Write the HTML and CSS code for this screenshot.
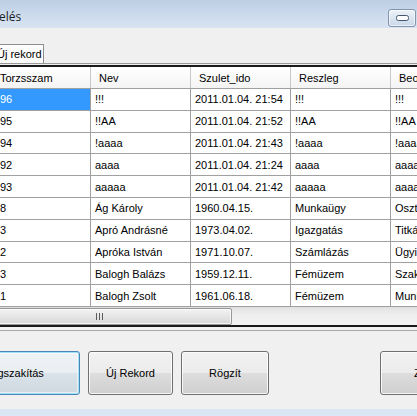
FILE: index.html
```html
<!DOCTYPE html>
<html lang="hu">
<head>
<meta charset="utf-8">
<title>Adatkezelés</title>
<link rel="stylesheet" href="styles.css">
</head>
<body>
<div class="window">
  <div class="titlebar">
    <span class="title">elés</span>
    <div class="minbtn">
      <svg width="13" height="6" viewBox="0 0 13 6"><rect x="0.5" y="0.5" width="12" height="5" rx="2" fill="#fff" stroke="#44556e"/></svg>
    </div>
  </div>
  <div class="client">
    <div class="tabs"><div class="tab">Új rekord</div></div>
    <div class="page">
      <div class="grid">
        <div class="viewport">
          <div class="row head">
            <div class="cell">Torzsszam</div><div class="cell">Nev</div><div class="cell">Szulet_ido</div><div class="cell">Reszleg</div><div class="cell">Beosztas</div>
          </div>
          <div class="row"><div class="cell sel">96</div><div class="cell">!!!</div><div class="cell">2011.01.04. 21:54</div><div class="cell">!!!</div><div class="cell">!!!</div></div>
          <div class="row"><div class="cell">95</div><div class="cell">!!AA</div><div class="cell">2011.01.04. 21:52</div><div class="cell">!!AA</div><div class="cell">!!AA</div></div>
          <div class="row"><div class="cell">94</div><div class="cell">!aaaa</div><div class="cell">2011.01.04. 21:43</div><div class="cell">!aaaa</div><div class="cell">!aaaa</div></div>
          <div class="row"><div class="cell">92</div><div class="cell">aaaa</div><div class="cell">2011.01.04. 21:24</div><div class="cell">aaaa</div><div class="cell">aaaa</div></div>
          <div class="row"><div class="cell">93</div><div class="cell">aaaaa</div><div class="cell">2011.01.04. 21:42</div><div class="cell">aaaaa</div><div class="cell">aaaaa</div></div>
          <div class="row"><div class="cell">8</div><div class="cell">Ág Károly</div><div class="cell">1960.04.15.</div><div class="cell">Munkaügy</div><div class="cell">Osztályvezető</div></div>
          <div class="row"><div class="cell">3</div><div class="cell">Apró Andrásné</div><div class="cell">1973.04.02.</div><div class="cell">Igazgatás</div><div class="cell">Titkárnő</div></div>
          <div class="row"><div class="cell">2</div><div class="cell">Apróka István</div><div class="cell">1971.10.07.</div><div class="cell">Számlázás</div><div class="cell">Ügyintéző</div></div>
          <div class="row"><div class="cell">3</div><div class="cell">Balogh Balázs</div><div class="cell">1959.12.11.</div><div class="cell">Fémüzem</div><div class="cell">Szakmunkás</div></div>
          <div class="row"><div class="cell">1</div><div class="cell">Balogh Zsolt</div><div class="cell">1961.06.18.</div><div class="cell">Fémüzem</div><div class="cell">Munkás</div></div>
        </div>
        <div class="hscroll">
          <div class="thumb">
            <svg width="7" height="7" viewBox="0 0 7 7"><path d="M0.5 0v7M3.5 0v7M6.5 0v7" stroke="#5a5a5a" stroke-width="1"/></svg>
          </div>
        </div>
      </div>
      <div class="actions">
        <button class="btn wide focus">Megszakítás</button>
        <button class="btn">Új Rekord</button>
        <button class="btn">Rögzít</button>
        <div class="spacer"></div>
        <button class="btn last">Zárás</button>
      </div>
    </div>
  </div>
  <div class="frame-bottom"></div>
</div>
</body>
</html>
```

FILE: styles.css
```css
html, body {
  margin: 0;
  padding: 0;
}
body {
  width: 417px;
  height: 416px;
  overflow: hidden;
  background: #f0f0f0;
  font-family: "Liberation Sans", Arial, sans-serif;
  font-size: 11px;
  color: #000;
}
.window {
  display: flex;
  flex-direction: column;
  height: 416px;
}
.titlebar {
  height: 28px;
  flex: none;
  display: flex;
  align-items: flex-start;
  justify-content: space-between;
  background: linear-gradient(#bccee4, #cddbed 55%, #d9e4f2);
}
.title {
  font-family: "Open Sans", "Noto Sans", sans-serif;
  font-size: 12px;
  color: #1e1e1e;
  margin-top: 9px;
  margin-left: -1px;
  line-height: 16px;
}
.minbtn {
  margin-top: 9px;
  margin-right: 1px;
  width: 26px;
  height: 16px;
  border: 1px solid #8295ad;
  border-radius: 3px;
  background: linear-gradient(#eef3f9, #dbe5f1 50%, #cad8ea);
  display: flex;
  align-items: center;
  justify-content: center;
  box-shadow: inset 0 0 0 1px rgba(255,255,255,0.6);
}
.client {
  flex: 1;
  display: flex;
  flex-direction: column;
}
.tabs {
  padding-top: 16px;
  height: 19px;
  flex: none;
  display: flex;
}
.tab {
  margin-left: -6px;
  width: 46px;
  height: 18px;
  border: 1px solid #8c8e94;
  border-bottom: none;
  background: #fcfcfc;
  line-height: 19px;
  padding-left: 2px;
  white-space: nowrap;
  overflow: hidden;
}
.page {
  flex: 1;
  display: flex;
  flex-direction: column;
  border-top: 1px solid #9a9a9a;
}
.grid {
  margin-top: 1px;
  border-top: 2px solid #1a1a1a;
  border-bottom: 2px solid #1a1a1a;
  background: #fff;
  overflow: hidden;
}
.viewport {
  margin-left: -6px;
  width: 560px;
}
.row {
  display: grid;
  grid-template-columns: 97px 100px 100px 100px 150px;
  height: 21.8px;
  box-sizing: border-box;
  border-bottom: 1px solid #a0a0a0;
  background: #fff;
}
.row.head {
  height: 22px;
  background: linear-gradient(#ffffff, #f4f4f4);
}
.cell {
  border-right: 1px solid #a0a0a0;
  padding-left: 4px;
  display: flex;
  align-items: center;
  white-space: nowrap;
  overflow: hidden;
}
.row .cell:first-child {
  padding-left: 6px;
}
.head .cell {
  padding-left: 8px;
  border-right-color: #c8c8c8;
}
.head .cell:first-child {
  padding-left: 6px;
}
.cell.sel {
  background: #3399ff;
  color: #fff;
}
.hscroll {
  height: 17px;
  background: linear-gradient(#e3e3e3, #efefef 40%, #f2f2f2);
  border-top: 1px solid #e0e0e0;
  display: flex;
  align-items: center;
}
.thumb {
  margin-left: -34px;
  width: 264px;
  height: 15px;
  border: 1px solid #989898;
  border-radius: 2px;
  background: linear-gradient(#f3f3f3, #e6e6e6 50%, #d6d6d6);
  box-shadow: inset 0 0 0 1px rgba(255,255,255,0.7);
  display: flex;
  align-items: center;
  justify-content: center;
}
.actions {
  margin-top: 3px;
  border-top: 1px solid #a8a8a8;
  padding-top: 20px;
  display: flex;
  align-items: flex-start;
  gap: 8px;
}
.btn {
  flex: none;
  width: 85px;
  height: 44px;
  border: 1px solid #707070;
  border-radius: 3px;
  font-family: "Liberation Sans", Arial, sans-serif;
  font-size: 11px;
  color: #000;
  padding: 0;
  background: linear-gradient(#f2f2f2, #ebebeb 50%, #dddddd 51%, #cfcfcf);
  box-shadow: inset 0 0 0 1px rgba(255,255,255,0.8);
}
.btn.wide {
  width: 134px;
  margin-left: -54px;
}
.btn.focus {
  border-color: #4a86b8;
  box-shadow: inset 0 0 0 1px #9fe0f7, inset 0 0 0 2px rgba(255,255,255,0.5);
  background: linear-gradient(#f0f3f6, #e9eef2 50%, #dbe3ea 51%, #cfd8df);
}
.btn:nth-of-type(3) {
  width: 88px;
}
.spacer {
  flex: 1;
}
.btn.last {
  width: 96px;
  margin-right: -59px;
}
.frame-bottom {
  height: 7px;
  flex: none;
  background: #dae6f4;
}
```
